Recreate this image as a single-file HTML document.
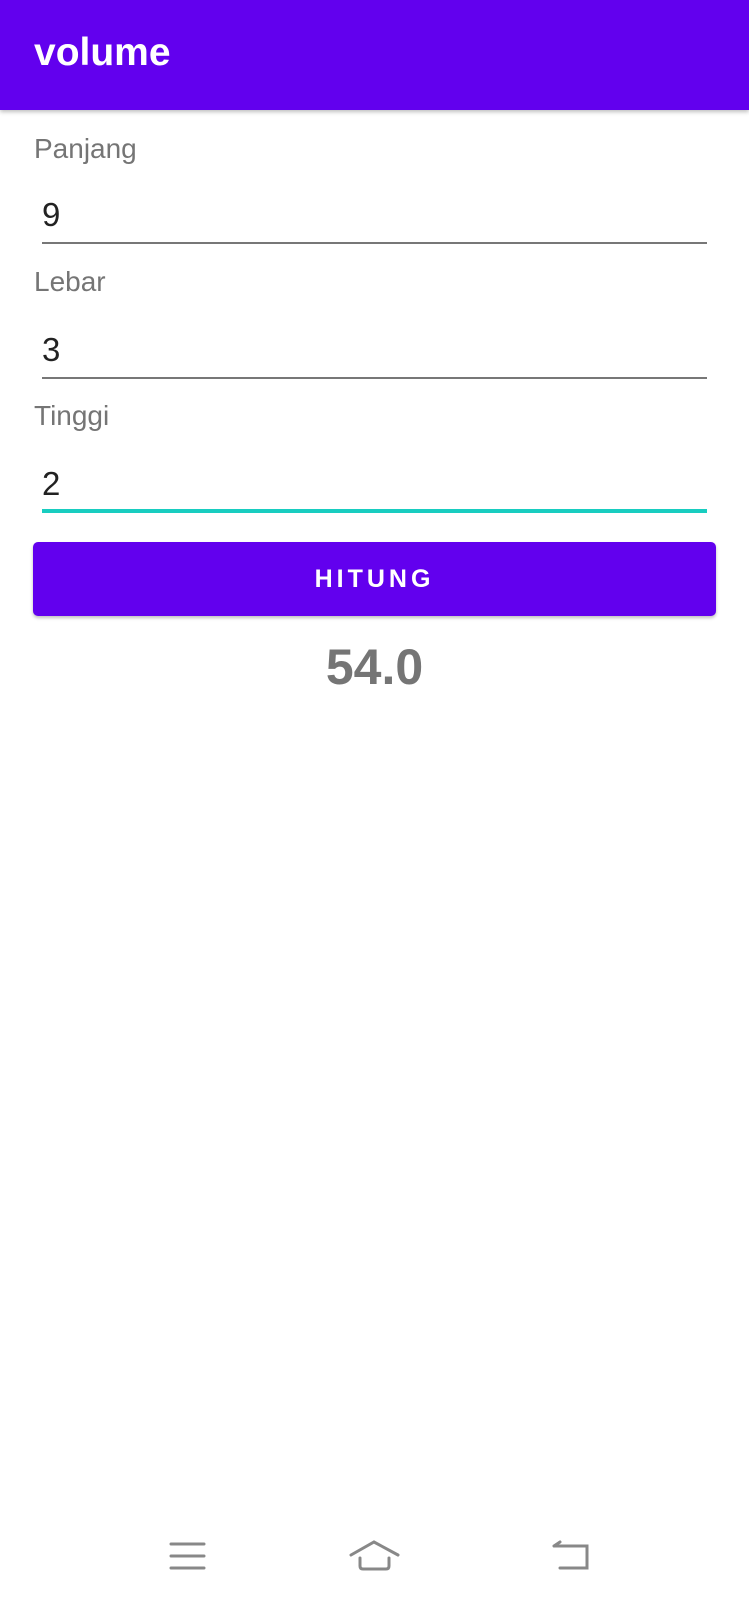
<!DOCTYPE html>
<html><head><meta charset="utf-8"><style>
body{margin:0;width:749px;height:1600px;background:#fff;font-family:"Liberation Sans",sans-serif;position:relative;overflow:hidden}
.bar{position:absolute;left:0;top:0;width:749px;height:110px;background:#6200ee;box-shadow:0 2px 4px rgba(0,0,0,.25)}
.title{position:absolute;left:34px;top:31px;color:#fff;font-size:39px;font-weight:bold;}
.lab{position:absolute;left:34px;color:#757575;font-size:28px}
.val{position:absolute;left:42px;color:#222;font-size:33px}
.line{position:absolute;left:42px;width:665px;height:2px;background:#777}
.btn{position:absolute;left:33px;top:542px;width:683px;height:74px;background:#6200ee;border-radius:5px;box-shadow:0 2px 3px rgba(0,0,0,.25);color:#fff;font-size:25px;font-weight:bold;letter-spacing:4px;text-align:center;line-height:74px}
.res{position:absolute;left:0;width:749px;text-align:center;top:638px;font-size:50px;font-weight:bold;color:#757575}
</style></head><body>
<div class="bar"><div class="title">volume</div></div>
<div class="lab" style="top:133px">Panjang</div>
<div class="val" style="top:196px">9</div>
<div class="line" style="top:242px"></div>
<div class="lab" style="top:266px">Lebar</div>
<div class="val" style="top:331px">3</div>
<div class="line" style="top:377px"></div>
<div class="lab" style="top:400px">Tinggi</div>
<div class="val" style="top:465px">2</div>
<div class="line" style="top:509px;height:4px;background:#18cdc0"></div>
<div class="btn">HITUNG</div>
<div class="res">54.0</div>
<svg style="position:absolute;left:0;top:1510px" width="749" height="90" fill="none" stroke="#888" stroke-width="3" stroke-linecap="round">
<path d="M171 34H204M171 46H204M171 58H204"/>
<path d="M351 45L374 32L398 45M360 48V56Q360 59 363 59H386Q389 59 389 56V48"/>
<path d="M554 36H587V58H560M554 36L560 32"/>
</svg>
</body></html>
